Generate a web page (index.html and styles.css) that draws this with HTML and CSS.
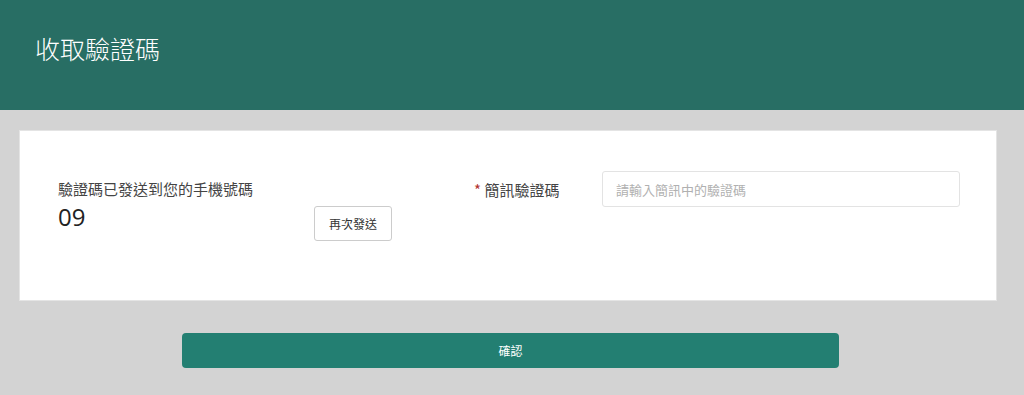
FILE: index.html
```html
<!DOCTYPE html>
<html>
<head>
  <title>收取驗證碼</title>
  <link rel="stylesheet" href="styles.css">
</head>
<body>
  <div class="header">
    <h1>收取驗證碼</h1>
  </div>

  <div class="main">
    <div class="card">
      <div class="sent">
        <div class="sentInfo">
          <div class="sentLabel">驗證碼已發送到您的手機號碼</div>
          <div class="phone">09</div>
        </div>
        <button class="resend">再次發送</button>
      </div>

      <div class="field">
        <label for="code"><span class="star">*</span> 簡訊驗證碼</label>
        <input type="text" id="code" name="code" placeholder="請輸入簡訊中的驗證碼">
      </div>
    </div>

    <button class="confirm">確認</button>
  </div>
</body>
</html>
```

FILE: styles.css
```css
body {
  margin: 0;
  background-color: #d3d3d3;
  font-family: "Noto Sans CJK TC", "Noto Sans", sans-serif;
  color: #333;
}

.header {
  height: 110px;
  background-color: #286e64;
  padding: 30px 0 0 35px;
  box-sizing: border-box;
}

.header h1 {
  margin: 0;
  font-size: 25px;
  font-weight: 300;
  line-height: 36px;
  color: #fff;
}

.main {
  padding: 20px 27px 0 19px;
}

.card {
  display: flex;
  align-items: flex-start;
  height: 171px;
  padding: 40px 20px 0 38px;
  box-sizing: border-box;
  background-color: #fff;
  border: 1px solid #e4e4e4;
}

.sent {
  flex-shrink: 0;
  width: 334px;
  display: flex;
  justify-content: space-between;
  align-items: flex-start;
  margin-top: 7px;
}

.sentLabel {
  font-size: 15px;
  line-height: 22px;
  color: #444;
}

.phone {
  margin-top: 2px;
  font-family: "Open Sans", sans-serif;
  font-size: 24px;
  line-height: 30px;
  color: #222;
}

.resend {
  margin-top: 28px;
  width: 78px;
  height: 35px;
  padding: 0;
  font-family: inherit;
  font-size: 12px;
  color: #333;
  background-color: #fff;
  border: 1px solid #ccc;
  border-radius: 3px;
  cursor: pointer;
}

.field {
  flex-shrink: 0;
  display: flex;
  align-items: center;
  margin-left: 82px;
}

.field label {
  width: 128px;
  font-size: 15px;
  color: #444;
}

.star {
  color: #b2332f;
}

.field input {
  width: 358px;
  height: 36px;
  padding: 0 13px;
  box-sizing: border-box;
  font-family: inherit;
  font-size: 13px;
  border: 1px solid #e3e3e3;
  border-radius: 3px;
  outline: none;
}

.field input::placeholder {
  color: #b0b0b0;
}

.confirm {
  display: block;
  width: 657px;
  height: 35px;
  margin: 32px 0 0 163px;
  font-family: inherit;
  font-size: 12px;
  color: #fff;
  background-color: #237f72;
  border: none;
  border-radius: 4px;
  cursor: pointer;
}
```
